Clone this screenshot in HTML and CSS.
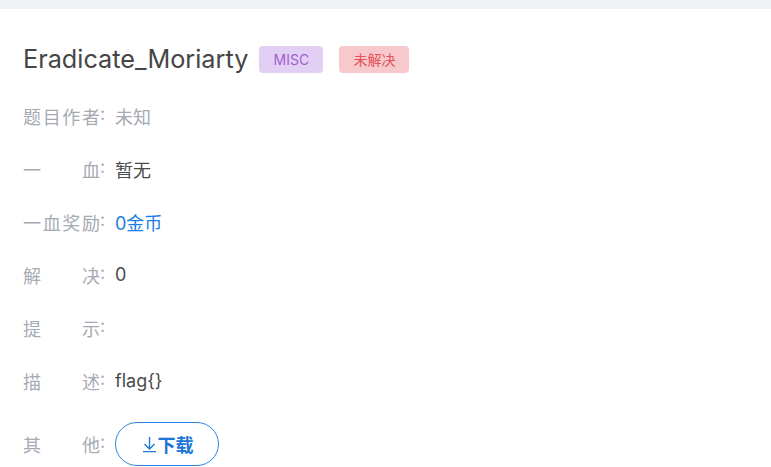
FILE: index.html
```html
<!DOCTYPE html>
<html lang="zh">
<head>
<meta charset="utf-8">
<link rel="stylesheet" href="styles.css">
</head>
<body>
<div class="topbar"></div>
<main class="panel">
  <div class="title-row">
    <h1 class="title">Eradicate_Moriarty</h1>
    <span class="badge badge-misc">MISC</span>
    <span class="badge badge-unsolved">未解决</span>
  </div>
  <div class="rows">
    <div class="row"><span class="label"><span class="lt">题目作者</span>:</span><span class="value muted">未知</span></div>
    <div class="row"><span class="label"><span class="lt">一血</span>:</span><span class="value">暂无</span></div>
    <div class="row"><span class="label"><span class="lt">一血奖励</span>:</span><span class="value link">0金币</span></div>
    <div class="row"><span class="label"><span class="lt">解决</span>:</span><span class="value">0</span></div>
    <div class="row"><span class="label"><span class="lt">提示</span>:</span><span class="value"></span></div>
    <div class="row"><span class="label"><span class="lt">描述</span>:</span><span class="value">flag{}</span></div>
    <div class="row row-btn"><span class="label"><span class="lt">其他</span>:</span>
      <button class="download"><svg class="dl-icon" width="15" height="18" viewBox="0 0 15 18"><path d="M7.5 2v12M2.5 9l5 5 5-5M1 16.6h13" fill="none" stroke="currentColor" stroke-width="1.3"/></svg>下载</button>
    </div>
  </div>
</main>
</body>
</html>
```
FILE: styles.css
```css
html, body {
  margin: 0;
  padding: 0;
  background: #ffffff;
}
body {
  font-family: Inter, "Noto Sans CJK SC", sans-serif;
  width: 771px;
  height: 467px;
  overflow: hidden;
}
.topbar {
  height: 9px;
  background: #f0f1f4;
}
.panel {
  padding: 35px 0 0 23px;
}
.title-row {
  display: flex;
  align-items: center;
  height: 30px;
}
.title {
  margin: 0;
  font-size: 25.25px;
  font-weight: 400;
  color: #454545;
}
.badge {
  display: inline-flex;
  align-items: center;
  justify-content: center;
  height: 27px;
  border-radius: 4px;
  font-size: 14px;
  box-sizing: border-box;
}
.badge-misc {
  margin-left: 11px;
  width: 64px;
  background: #e2d0f4;
  color: #a45dd0;
}
.badge-unsolved {
  margin-left: 16px;
  width: 70px;
  background: #f8c9cc;
  color: #e2525c;
}
.rows {
  margin-top: 29px;
  display: flex;
  flex-direction: column;
  gap: 28px;
}
.row {
  display: flex;
  align-items: center;
  height: 25px;
  font-size: 18px;
}
.row-btn {
  height: 44px;
  margin-top: 1px;
}
.label {
  display: flex;
  width: 92px;
  color: #a6aab4;
}
.lt {
  width: 77px;
  text-align: justify;
  text-align-last: justify;
}
.value {
  color: #4a4a4a;
}
.value.muted {
  color: #a6aab4;
}
.value.link {
  color: #1b80e0;
}
.download {
  display: inline-flex;
  align-items: center;
  justify-content: center;
  width: 104px;
  height: 44px;
  border: 1px solid #2a87e3;
  border-radius: 22px;
  background: #fff;
  color: #1b76d6;
  font-family: "Noto Sans CJK SC", sans-serif;
  font-size: 18px;
  font-weight: 700;
  padding: 0 0 0 1px;
}
.dl-icon {
  margin-right: 1px;
}
```
